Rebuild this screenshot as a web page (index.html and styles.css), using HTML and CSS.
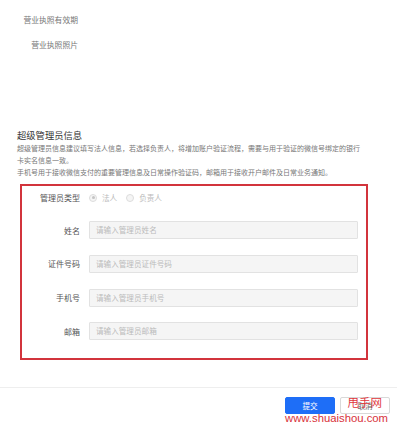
FILE: index.html
```html
<!DOCTYPE html>
<html lang="zh-CN">
<head>
<meta charset="utf-8">
<title>超级管理员信息</title>
<link rel="stylesheet" href="styles.css">
</head>
<body>
<div class="page">
  <div class="upload-fields">
    <div class="plain-row"><span class="plain-label">营业执照有效期</span></div>
    <div class="plain-row"><span class="plain-label">营业执照照片</span></div>
  </div>

  <section class="admin">
    <h2 class="admin-title">超级管理员信息</h2>
    <p class="admin-desc">超级管理员信息建议填写法人信息，若选择负责人，将增加账户验证流程，需要与用于验证的微信号绑定的银行卡实名信息一致。<br>手机号用于接收微信支付的重要管理信息及日常操作验证码，邮箱用于接收开户邮件及日常业务通知。</p>

    <div class="form-box">
      <div class="form-row radio-row">
        <span class="form-label">管理员类型</span>
        <label class="radio"><span class="radio-dot checked"></span>法人</label>
        <label class="radio"><span class="radio-dot"></span>负责人</label>
      </div>
      <div class="form-row">
        <span class="form-label">姓名</span>
        <div class="input">请输入管理员姓名</div>
      </div>
      <div class="form-row">
        <span class="form-label">证件号码</span>
        <div class="input">请输入管理员证件号码</div>
      </div>
      <div class="form-row">
        <span class="form-label">手机号</span>
        <div class="input">请输入管理员手机号</div>
      </div>
      <div class="form-row">
        <span class="form-label">邮箱</span>
        <div class="input">请输入管理员邮箱</div>
      </div>
    </div>
  </section>

  <footer class="footer">
    <button class="btn btn-primary">提交</button>
    <button class="btn btn-default">取消</button>
    <div class="watermark">
      <span class="wm-cn">甩手网</span>
      <span class="wm-url">www.shuaishou.com</span>
    </div>
  </footer>
</div>
</body>
</html>
```

FILE: styles.css
```css
html, body {
  margin: 0;
  padding: 0;
  background: #ffffff;
}
body {
  font-family: "Noto Sans CJK SC", "Noto Sans", sans-serif;
  color: #333;
}
.page {
  width: 397px;
  height: 433px;
  position: relative;
  overflow: hidden;
}
.upload-fields {
  padding-top: 14px;
  display: flex;
  flex-direction: column;
  gap: 13px;
}
.plain-row {
  height: 12px;
  display: flex;
}
.plain-label {
  width: 78px;
  text-align: right;
  font-size: 7.8px;
  line-height: 12px;
  color: #777;
}
.admin {
  margin-top: 77px;
  padding-left: 17px;
}
.admin-title {
  margin: 0;
  font-size: 9.3px;
  line-height: 14px;
  font-weight: normal;
  color: #333;
}
.admin-desc {
  margin: 1px 0 0;
  width: 345px;
  font-size: 7px;
  line-height: 11.8px;
  color: #777;
}
.form-box {
  margin-top: 6px;
  margin-left: 3px;
  width: 344px;
  border: 2px solid #d2343c;
  padding: 3px 0 18px;
  display: flex;
  flex-direction: column;
  gap: 15.6px;
}
.form-row {
  display: flex;
  align-items: center;
  height: 18px;
}
.radio-row {
  height: 16.4px;
}
.form-label {
  width: 58px;
  text-align: right;
  font-size: 8px;
  color: #555;
  flex: none;
}
.input {
  margin-left: 9px;
  width: 261px;
  height: 16px;
  border: 1px solid #e2e2e2;
  background: #f5f5f5;
  border-radius: 1px;
  font-size: 7.6px;
  line-height: 16px;
  padding-left: 6px;
  color: #bbb;
}
.radio {
  display: flex;
  align-items: center;
  font-size: 7.6px;
  color: #bbb;
  margin-left: 9px;
}
.radio + .radio {
  margin-left: 9px;
}
.radio-dot {
  width: 6px;
  height: 6px;
  border: 1px solid #ddd;
  border-radius: 50%;
  background: #f5f5f5;
  margin-right: 5px;
  position: relative;
}
.radio-dot.checked::after {
  content: "";
  position: absolute;
  left: 1.5px;
  top: 1.5px;
  width: 3px;
  height: 3px;
  border-radius: 50%;
  background: #c4c4c4;
}
.footer {
  margin-top: 27px;
  border-top: 1px solid #eeeeee;
  padding: 9px 7px 0 0;
  display: flex;
  justify-content: flex-end;
  gap: 5px;
  position: relative;
  height: 40px;
}
.btn {
  width: 50px;
  height: 17px;
  font-family: inherit;
  font-size: 7.6px;
  border-radius: 2px;
  padding: 0;
  cursor: pointer;
}
.btn-primary {
  background: #1e6ef7;
  border: 1px solid #1e6ef7;
  color: #fff;
}
.btn-default {
  background: #fff;
  border: 1px solid #d9d9d9;
  color: #666;
}
.watermark {
  position: absolute;
  left: 276px;
  top: 8px;
  width: 112px;
  display: flex;
  flex-direction: column;
  align-items: flex-end;
  pointer-events: none;
}
.wm-cn {
  font-size: 11.5px;
  line-height: 13px;
  color: #e0363c;
  margin-right: 6px;
}
.wm-url {
  font-family: "Liberation Sans", Arial, sans-serif;
  font-size: 11.3px;
  line-height: 13px;
  color: #d8323a;
  margin-top: 3px;
}
```
